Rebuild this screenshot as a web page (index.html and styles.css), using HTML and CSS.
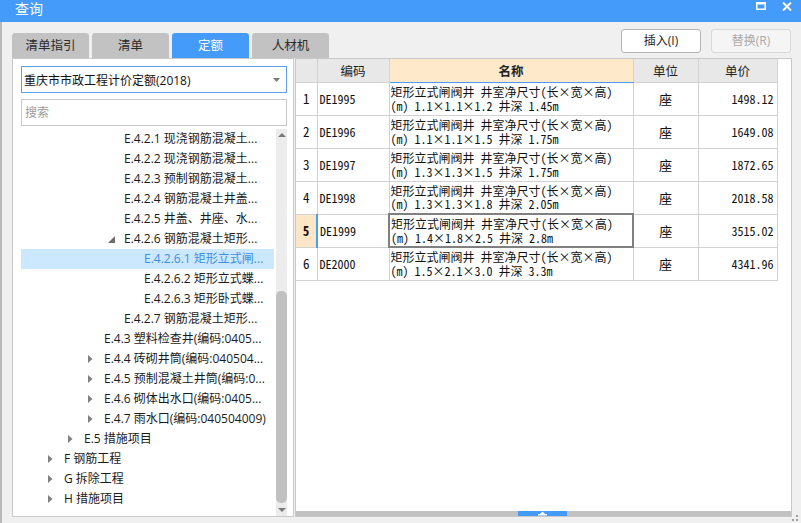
FILE: index.html
```html
<!DOCTYPE html>
<html lang="zh-CN">
<head>
<meta charset="utf-8">
<title>查询</title>
<link rel="stylesheet" href="styles.css">
</head>
<body>
<div class="window">
  <div class="titlebar">
    <span class="title">查询</span>
    <div class="win-ctrls">
      <svg class="ic-max" width="10" height="8" viewBox="0 0 10 8"><rect x="0.75" y="0.75" width="8.5" height="6.5" fill="none" stroke="#fff" stroke-width="1.5"/><rect x="0" y="0" width="10" height="2.5" fill="#fff"/></svg>
      <svg class="ic-close" width="10" height="9" viewBox="0 0 10 9"><path d="M1 0.5 L9 8.5 M9 0.5 L1 8.5" stroke="#fff" stroke-width="2"/></svg>
    </div>
  </div>
  <div class="main">
    <div class="toolbar">
      <div class="tabs">
        <div class="tab">清单指引</div>
        <div class="tab">清单</div>
        <div class="tab active">定额</div>
        <div class="tab">人材机</div>
      </div>
      <div class="actions">
        <div class="btn">插入(I)</div>
        <div class="btn disabled">替换(R)</div>
      </div>
    </div>
    <div class="content">
      <div class="left">
        <div class="select">
          <span>重庆市市政工程计价定额(2018)</span>
          <svg width="7" height="4" viewBox="0 0 7 4"><path d="M0 0 H7 L3.5 4 Z" fill="#7a7a7a"/></svg>
        </div>
        <div class="search">搜索</div>
        <div class="tree-wrap">
          <div class="tree">
            <div class="row l3"><span class="arr"></span>E.4.2.1 现浇钢筋混凝土...</div>
            <div class="row l3"><span class="arr"></span>E.4.2.2 现浇钢筋混凝土...</div>
            <div class="row l3"><span class="arr"></span>E.4.2.3 预制钢筋混凝土...</div>
            <div class="row l3"><span class="arr"></span>E.4.2.4 钢筋混凝土井盖...</div>
            <div class="row l3"><span class="arr"></span>E.4.2.5 井盖、井座、水...</div>
            <div class="row l3"><span class="arr"><svg width="7" height="7" viewBox="0 0 7 7"><path d="M7 0 V7 H0 Z" fill="#6b6b6b"/></svg></span>E.4.2.6 钢筋混凝土矩形...</div>
            <div class="row l4 sel"><span class="arr"></span>E.4.2.6.1 矩形立式闸...</div>
            <div class="row l4"><span class="arr"></span>E.4.2.6.2 矩形立式蝶...</div>
            <div class="row l4"><span class="arr"></span>E.4.2.6.3 矩形卧式蝶...</div>
            <div class="row l3"><span class="arr"></span>E.4.2.7 钢筋混凝土矩形...</div>
            <div class="row l2"><span class="arr"></span>E.4.3 塑料检查井(编码:0405...</div>
            <div class="row l2"><span class="arr"><svg width="5" height="8" viewBox="0 0 5 8"><path d="M0 0 L4.5 4 L0 8 Z" fill="#808080"/></svg></span>E.4.4 砖砌井筒(编码:040504...</div>
            <div class="row l2"><span class="arr"><svg width="5" height="8" viewBox="0 0 5 8"><path d="M0 0 L4.5 4 L0 8 Z" fill="#808080"/></svg></span>E.4.5 预制混凝土井筒(编码:0...</div>
            <div class="row l2"><span class="arr"><svg width="5" height="8" viewBox="0 0 5 8"><path d="M0 0 L4.5 4 L0 8 Z" fill="#808080"/></svg></span>E.4.6 砌体出水口(编码:0405...</div>
            <div class="row l2"><span class="arr"><svg width="5" height="8" viewBox="0 0 5 8"><path d="M0 0 L4.5 4 L0 8 Z" fill="#808080"/></svg></span>E.4.7 雨水口(编码:040504009)</div>
            <div class="row l1"><span class="arr"><svg width="5" height="8" viewBox="0 0 5 8"><path d="M0 0 L4.5 4 L0 8 Z" fill="#808080"/></svg></span>E.5 措施项目</div>
            <div class="row l0"><span class="arr"><svg width="5" height="8" viewBox="0 0 5 8"><path d="M0 0 L4.5 4 L0 8 Z" fill="#808080"/></svg></span>F 钢筋工程</div>
            <div class="row l0"><span class="arr"><svg width="5" height="8" viewBox="0 0 5 8"><path d="M0 0 L4.5 4 L0 8 Z" fill="#808080"/></svg></span>G 拆除工程</div>
            <div class="row l0"><span class="arr"><svg width="5" height="8" viewBox="0 0 5 8"><path d="M0 0 L4.5 4 L0 8 Z" fill="#808080"/></svg></span>H 措施项目</div>
          </div>
          <div class="vscroll">
            <div class="sbtn"><svg width="8" height="4" viewBox="0 0 8 4"><path d="M0 4 L4 0 L8 4 Z" fill="#7a7a7a"/></svg></div>
            <div class="thumb"></div>
            <div class="sbtn end"><svg width="8" height="4" viewBox="0 0 8 4"><path d="M0 0 L8 0 L4 4 Z" fill="#7a7a7a"/></svg></div>
          </div>
        </div>
      </div>
      <div class="right">
        <div class="table-area">
          <table class="grid">
            <colgroup><col class="c-no"><col class="c-code"><col class="c-name"><col class="c-unit"><col class="c-price"></colgroup>
            <thead>
              <tr><th></th><th>编码</th><th class="hl">名称</th><th>单位</th><th>单价</th></tr>
            </thead>
            <tbody>
              <tr><td class="no">1</td><td class="code">DE1995</td><td class="name"><div class="ln">矩形立式闸阀井 井室净尺寸(长×宽×高)</div><div class="ln">(m) 1.1×1.1×1.2 井深 1.45m</div></td><td class="unit">座</td><td class="price">1498.12</td></tr>
              <tr><td class="no">2</td><td class="code">DE1996</td><td class="name"><div class="ln">矩形立式闸阀井 井室净尺寸(长×宽×高)</div><div class="ln">(m) 1.1×1.1×1.5 井深 1.75m</div></td><td class="unit">座</td><td class="price">1649.08</td></tr>
              <tr><td class="no">3</td><td class="code">DE1997</td><td class="name"><div class="ln">矩形立式闸阀井 井室净尺寸(长×宽×高)</div><div class="ln">(m) 1.3×1.3×1.5 井深 1.75m</div></td><td class="unit">座</td><td class="price">1872.65</td></tr>
              <tr><td class="no">4</td><td class="code">DE1998</td><td class="name"><div class="ln">矩形立式闸阀井 井室净尺寸(长×宽×高)</div><div class="ln">(m) 1.3×1.3×1.8 井深 2.05m</div></td><td class="unit">座</td><td class="price">2018.58</td></tr>
              <tr class="cur"><td class="no">5</td><td class="code">DE1999</td><td class="name focus"><div class="ln">矩形立式闸阀井 井室净尺寸(长×宽×高)</div><div class="ln">(m) 1.4×1.8×2.5 井深 2.8m</div></td><td class="unit">座</td><td class="price">3515.02</td></tr>
              <tr><td class="no">6</td><td class="code">DE2000</td><td class="name"><div class="ln">矩形立式闸阀井 井室净尺寸(长×宽×高)</div><div class="ln">(m) 1.5×2.1×3.0 井深 3.3m</div></td><td class="unit">座</td><td class="price">4341.96</td></tr>
            </tbody>
          </table>
        </div>
        <div class="hscroll">
          <div class="handle"><svg width="9" height="5" viewBox="0 0 9 5"><path d="M2 3 L4.5 0.5 L7 3 Z" fill="#fff"/><rect x="0" y="3" width="9" height="1.5" fill="#fff"/></svg></div>
        </div>
      </div>
    </div>
  </div>
  <div class="grip"><i></i><i></i><i></i></div>
</div>
</body>
</html>
```
FILE: styles.css
```css
* { box-sizing: border-box; }
body {
  margin: 0;
  font-family: "Open Sans", "Noto Sans CJK SC", sans-serif;
  font-size: 12px;
  color: #1e1e1e;
  background: #f0f0f0;
}
.window {
  width: 801px;
  height: 523px;
  display: flex;
  flex-direction: column;
  background: #f0f0f0;
  overflow: hidden;
  position: relative;
}
.titlebar {
  height: 22px;
  flex: none;
  background: #449bf9;
  color: #fff;
  display: flex;
  justify-content: space-between;
  align-items: flex-start;
  padding: 0 9px 0 15px;
}
.title {
  font-size: 14px;
  line-height: 18px;
}
.win-ctrls {
  display: flex;
  gap: 16px;
  padding-top: 2px;
}
.main {
  flex: 1;
  display: flex;
  flex-direction: column;
  border-left: 2px solid #b9b9b9;
  padding: 0 9px 6px 10px;
  min-height: 0;
}
.toolbar {
  height: 36px;
  flex: none;
  display: flex;
  justify-content: space-between;
}
.tabs {
  display: flex;
  gap: 3px;
  align-self: flex-end;
}
.tab {
  width: 77px;
  height: 25px;
  line-height: 25px;
  text-align: center;
  background: #c2c2c2;
  color: #2a2a2a;
  border-radius: 3px 3px 0 0;
  font-size: 12.5px;
}
.tab.active {
  background: #449bf9;
  color: #fff;
}
.actions {
  display: flex;
  gap: 10px;
  padding-top: 7px;
  padding-right: 1px;
}
.btn {
  width: 80px;
  height: 24px;
  line-height: 22px;
  text-align: center;
  background: #fff;
  border: 1px solid #b5b5b5;
  border-radius: 3px;
  font-size: 12px;
  color: #1e1e1e;
}
.btn.disabled {
  background: #f5f5f5;
  border-color: #d8d8d8;
  color: #a9a9a9;
}
.content {
  flex: 1;
  display: flex;
  gap: 1px;
  min-height: 0;
}
.left {
  width: 282px;
  flex: none;
  background: #fff;
  border: 1px solid #c9c9c9;
  padding: 7px 6px 0 8px;
  display: flex;
  flex-direction: column;
}
.select {
  height: 27px;
  flex: none;
  border: 1px solid #5ba0ea;
  display: flex;
  align-items: center;
  justify-content: space-between;
  padding: 0 6px 0 2px;
  font-size: 12px;
  color: #111;
}
.search {
  height: 27px;
  flex: none;
  margin-top: 6px;
  border: 1px solid #c8c8c8;
  padding-left: 3px;
  line-height: 25px;
  color: #9c9c9c;
}
.tree-wrap {
  flex: 1;
  margin-top: 3px;
  display: flex;
  gap: 2px;
  min-height: 0;
  overflow: hidden;
}
.tree {
  flex: 1;
  min-width: 0;
}
.row {
  height: 20px;
  line-height: 20px;
  white-space: nowrap;
  display: flex;
  align-items: center;
  color: #1a1a1a;
}
.row.l0 { padding-left: 27px; }
.row.l1 { padding-left: 47px; }
.row.l2 { padding-left: 67px; }
.row.l3 { padding-left: 87px; }
.row.l4 { padding-left: 107px; }
.row.sel {
  background: #cce8ff;
  color: #3b8fe3;
}
.arr {
  width: 16px;
  flex: none;
  display: flex;
  align-items: center;
}
.vscroll {
  width: 11px;
  flex: none;
  background: #ececec;
  display: flex;
  flex-direction: column;
  align-items: center;
}
.sbtn {
  height: 12px;
  flex: none;
  display: flex;
  align-items: center;
  justify-content: center;
  width: 100%;
}
.sbtn.end {
  margin-top: auto;
  height: 13px;
}
.thumb {
  margin-top: 150px;
  width: 11px;
  height: 212px;
  background: #c1c1c1;
  border-radius: 5px;
}
.right {
  flex: 1;
  background: #fff;
  border: 1px solid #c8c8c8;
  display: flex;
  flex-direction: column;
  min-width: 0;
}
.table-area {
  flex: 1;
}
.grid {
  border-collapse: collapse;
  table-layout: fixed;
  width: 481px;
  font-family: "Noto Sans Mono CJK SC", "Noto Sans CJK SC", monospace;
  font-size: 12px;
  color: #111;
}
.c-no { width: 21px; }
.c-code { width: 72px; }
.c-name { width: 244px; }
.c-unit { width: 65px; }
.c-price { width: 79px; }
.grid th {
  height: 23px;
  background: #e8e8e8;
  border: 1px solid #d2d2d2;
  border-top: none;
  font-family: "Open Sans", "Noto Sans CJK SC", sans-serif;
  font-weight: normal;
  font-size: 12.5px;
  color: #222;
  padding: 0;
}
.grid th:first-child { border-left: none; }
.grid th.hl {
  background: #fee9cb;
  font-weight: bold;
  border-bottom: 1px solid #4a9bf9;
}
.grid td {
  height: 33px;
  border: 1px solid #d2d2d2;
  padding: 0;
  white-space: nowrap;
}
.grid td:first-child { border-left: none; }
.grid td.no {
  text-align: center;
  font-size: 13px;
}
.grid td.code { padding-left: 2px; }
.grid td.name {
  padding-left: 1px;
}
.ln {
  height: 13.5px;
  line-height: 13.5px;
  overflow: visible;
}
.grid td.unit {
  text-align: center;
  font-family: "Open Sans", "Noto Sans CJK SC", sans-serif;
  font-size: 13px;
}
.grid td.price {
  text-align: right;
  padding-right: 3px;
}
.grid tr.cur td.no {
  background: #fde6c6;
  font-weight: bold;
  border-right: 2px solid #4a9bf9;
}
.grid td.focus {
  border: 2px solid #808080;
}
.hscroll {
  height: 5px;
  flex: none;
  background: #c2c2c2;
  display: flex;
  padding-left: 222px;
}
.handle {
  width: 49px;
  height: 5px;
  background: #449bf9;
  display: flex;
  justify-content: center;
  align-items: center;
}
.grip {
  position: absolute;
  right: 3px;
  bottom: 2px;
  width: 6px;
  height: 6px;
}
.grip i {
  position: absolute;
  width: 2px;
  height: 2px;
  background: #a0a0a0;
}
.grip i:nth-child(1) { right: 0; top: 0; }
.grip i:nth-child(2) { right: 0; bottom: 0; }
.grip i:nth-child(3) { left: 0; bottom: 0; }
```
